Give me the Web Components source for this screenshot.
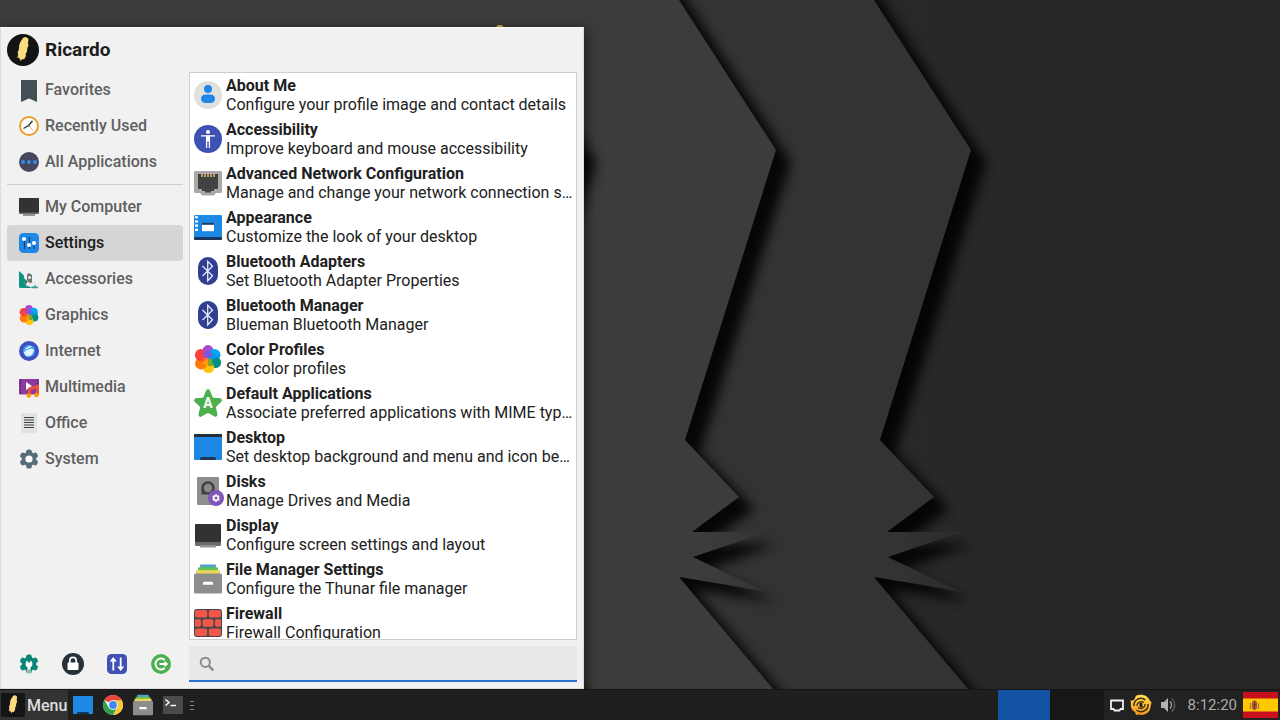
<!DOCTYPE html>
<html lang="en">
<head>
<meta charset="utf-8">
<title>Desktop</title>
<style>
html, body { height: 100%; margin: 0; }
body { font-family: Roboto, "Liberation Sans", sans-serif; font-size: 16px; line-height: 19px; background: #313231; overflow: hidden; }
</style>
</head>
<body>
<desk-top></desk-top>
<script>
const gear = (c, fill, hole, holeFill) => {
  let s = '';
  for (let i = 0; i < 6; i++) s += `<rect x="${c - c * .28}" y="${c * .04}" width="${c * .56}" height="${c}" rx="${c * .22}" transform="rotate(${i * 60} ${c} ${c})" fill="${fill}"/>`;
  return s + `<circle cx="${c}" cy="${c}" r="${c * .72}" fill="${fill}"/><circle cx="${c}" cy="${c}" r="${hole}" fill="${holeFill}"/>`;
};
const flower = `<circle cx="14" cy="5.5" r="5.4" fill="#a64bd0"/><circle cx="20.5" cy="10" r="6" fill="#06a4f5"/><circle cx="21.5" cy="17.5" r="5.6" fill="#008f86"/><circle cx="14.5" cy="22.5" r="5.6" fill="#ffc30b"/><circle cx="7" cy="18.5" r="5.9" fill="#ff7a08"/><circle cx="6.8" cy="10" r="5.9" fill="#f9403a"/><path d="M14 14V2.500A5.400 5.400 0 0 0 8.800 6.500L9 11Z" fill="#a64bd0"/><path d="M14 14L10 8.500 13.500 6 19 9Z" fill="#7a55dd"/><path d="M14 14L19 9 22 13.500 16 16Z" fill="#0b93dc"/><path d="M14 14L18 14 19 21 14 21Z" fill="#7fa62c"/><path d="M14 14L14 20 9 20 9 15Z" fill="#ff9a05"/><path d="M14 14L8 17 7 12Z" fill="#fb5a24"/>`;
const feather = `<path d="M15 5.500C16 3.500 18 2.800 19.200 3.200L21.300 4.800C21.800 6 21 7.500 21 9.500L21.600 11.500 20.300 14 20 17.500 18.600 20 19 22 17 25.500 15.300 25 13.800 26.800 12.600 24.500 10.600 23.200 11.200 20 10.600 18.500 12 15 12.200 11 13.400 8Z" fill="#fbdc80"/><path d="M11.500 22L10 24M14.500 25.500L13.500 27" stroke="#c99c3a" stroke-width=".8"/>`;
const bluetooth = `<rect x="4" width="20" height="28" rx="10" fill="#303f8f"/><path d="M8.500 9L18.500 18.700 13.700 23.800V4.300L18.500 9.300 8.500 19" fill="none" stroke="#e6eafb" stroke-width="1.300"/>`;
const monitor = `<rect x="1" y="3" width="26" height="22" rx="1.500" fill="#6b6b6b"/><rect x="1" y="3" width="26" height="18" rx="1.200" fill="#323232"/><rect x="6" y="24" width="16" height="2.500" fill="#949494"/>`;
const drawer = `<rect x="6" y="-.5" width="16" height="4" rx="1" fill="#4ba4c9"/><rect x="4" y="2.300" width="20" height="4" rx="1" fill="#69c04c"/><rect x="2" y="5.300" width="24" height="5" rx="1" fill="#ecd65c"/><rect y="8.500" width="28" height="20" rx="1.500" fill="#8d8d8d"/><rect x="9" y="16.800" width="10" height="3" rx=".5" fill="#fff"/>`;
const ICONS = {
  avatar: [32, `<circle cx="16" cy="16" r="16" fill="#141414"/>` + feather],
  whisker: [32, `<rect width="32" height="32" rx="1" fill="#151515"/>` + feather],
  bookmark: [20, `<path d="M2.500 0h15a.5.5 0 0 1 .5.5V22l-8-3.500L2 22V.5a.5.5 0 0 1 .5-.5Z" fill="#434f55"/>`],
  recent: [20, `<circle cx="10" cy="10" r="9" fill="#fdfdfd" stroke="#e99e2c" stroke-width="2"/><path d="M4.500 12.500L9.500 9.500 13.500 5" fill="none" stroke="#333" stroke-width="1.400"/><path d="M10 10l4 4.500" stroke="#e98b8b" stroke-width=".8"/><circle cx="10" cy="9.800" r="1.100" fill="#38a05a"/>`],
  apps: [20, `<circle cx="10" cy="10" r="10" fill="#46465f"/><g fill="#2f8fe8"><circle cx="4" cy="10" r="2"/><circle cx="10" cy="10" r="2"/><circle cx="16" cy="10" r="2"/></g>`],
  computer: [20, `<rect y="1" width="20" height="16" rx="1" fill="#6b6b6b"/><rect y="1" width="20" height="14.500" rx="1" fill="#323232"/><rect x="4" y="17" width="12" height="2" fill="#949494"/>`],
  display: [28, monitor],
  settings: [20, `<rect width="20" height="20" rx="4.500" fill="#1e88e5"/><path d="M5.500 7v9M10.500 4v8M15 12.500V16M10.500 13v3" stroke="#1c3c63" stroke-width="1.200"/><g fill="#fff"><circle cx="5" cy="6" r="2"/><circle cx="10" cy="12" r="2"/><circle cx="15" cy="10" r="2"/></g>`],
  accessories: [20, `<path d="M0 2l5 4.500V9l3 3-3 2 3 2.500L13 19H1.500A1.500 1.500 0 0 1 0 17.500Z" fill="#0b9480"/><path d="M8 5.500l2-1.500 3 2v7.500l-3 .5-2-3Z" fill="#6f7471"/><circle cx="10.500" cy="8.500" r="1.500" fill="#f1f1f1"/><path d="M8 12l-2 3" stroke="#4f5452" stroke-width="1.500"/><path d="M12 17.500h3l1.500-2 1 2.500 2-.8-1 2H13Z" fill="#3c9c8c"/><path d="M7 17l9-4" stroke="#dedede"/>`],
  flower: [28, flower],
  internet: [20, `<circle cx="10" cy="10" r="10" fill="#3e51c1"/><circle cx="10" cy="10" r="6" fill="#42a2f2"/><path d="M5 12c0-4 4-7.500 8-7l-2 2c2-.3 3 1 4 2l-1 3c-1 3-5 4-7 3Z" fill="#e2f2ff"/><path d="M4.500 11C8 6.500 12 8 15.500 6" stroke="#4a9be8" stroke-width="1.200" fill="none"/>`],
  multimedia: [20, `<rect y="2" width="20" height="15.500" rx=".8" fill="#8d3a9f"/><path d="M1.500 2.500v15M18.500 2.500v7" stroke="#4b1f63" stroke-width="1.200" stroke-dasharray="1.500 1.500"/><path d="M7 5l6 4-6 4Z" fill="#fff"/><path d="M10.500 18.500V12l8-2.500v8" fill="none" stroke="#ef5038" stroke-width="2.800"/><circle cx="9.800" cy="18.500" r="2.300" fill="#ff9800"/><circle cx="17.500" cy="18" r="2.300" fill="#ff9800"/>`],
  office: [20, `<rect x="2" width="16" height="20" rx="1" fill="#e2e2e2"/><path d="M5 4.500h10M5 7h10M5 9.500h10M5 12h10M5 14.500h10" stroke="#3f3f3f" stroke-width="1.100"/>`],
  system: [20, gear(10, '#546e7a', 3.6, '#fff')],
  aboutme: [28, `<circle cx="14" cy="14" r="14" fill="#e3e1df"/><circle cx="14" cy="8" r="4" fill="#1e88e5"/><rect x="7" y="13.500" width="14" height="8.500" rx="4.200" fill="#1e88e5"/>`],
  accessibility: [28, `<circle cx="14" cy="14" r="14" fill="#3f51b5"/><circle cx="14" cy="7" r="2" fill="#fff"/><path d="M7 10.800h14M12.600 11v12M15.400 11v12" fill="none" stroke="#fff" stroke-width="1.300"/><path d="M12 10.500h4v6h-4Z" fill="#fff"/>`],
  network: [28, `<path d="M1 2h26a1 1 0 0 1 1 1v20a1 1 0 0 1-1 1h-5l-2 2.500H8L6 24H1a1 1 0 0 1-1-1V3a1 1 0 0 1 1-1Z" fill="#a9a9a9"/><path d="M4 5h20v15h-4v2h-3v1.500h-6V22H8v-2H4Z" fill="#424242"/><path d="M8 5v3M11 5v3M14 5v3M17 5v3M20 5v3" stroke="#e6bd7e" stroke-width="1.500"/>`],
  appearance: [28, `<rect y="2" width="28" height="25" rx="1.200" fill="#1e88e5"/><path d="M0 24h28v2a1 1 0 0 1-1 1H1a1 1 0 0 1-1-1Z" fill="#17365a"/><path d="M1 3.200h3v2H1zM1 7.400h3v2.200H1zM1 11.600h3v2.200H1zM1 15.800h3V18H1z" fill="#fff"/><path d="M8 9.800h12v2.500H8z" fill="#173d69"/><path d="M8 11.800h12v6.400H8z" fill="#fff"/>`],
  bluetooth: [28, bluetooth],
  defaults: [28, `<path d="M14 2.200l3.500 8.300 8.500.8-6.400 6 1.900 8.500L14 21.500 6.500 25.800l1.900-8.500-6.400-6 8.500-.8Z" fill="#4caf50" stroke="#4caf50" stroke-width="4" stroke-linejoin="round"/><text x="14" y="19" text-anchor="middle" font-family="Roboto" font-weight="700" font-size="14" fill="#fff">A</text>`],
  desktop: [28, `<rect y="1" width="28" height="26" rx="1.200" fill="#1e88e5"/><path d="M1 1h26a1 1 0 0 1 1 1v2H0V2a1 1 0 0 1 1-1Z" fill="#2b3036"/><path d="M6 27v-1a2 2 0 0 1 2-2h12a2 2 0 0 1 2 2v1Z" fill="#1b3653"/>`],
  disks: [28, `<rect x="3" width="22" height="28" rx="1" fill="#8e8e8e"/><circle cx="14" cy="11" r="5.500" fill="#8a8a8a" stroke="#424242" stroke-width="2.600"/><path d="M7.500 11v6.500H12" fill="#424242"/><circle cx="22" cy="21" r="8" fill="#7e57b8"/><g transform="translate(18 17)">${gear(4, '#fff', 1.5, '#7e57b8')}</g>`],
  drawer: [28, drawer],
  firewall: [28, `<rect width="28" height="28" rx="3" fill="#474747"/><g fill="#f3574a"><rect x="1" y="1" width="12.300" height="7.600" rx="2"/><rect x="14.700" y="1" width="12.300" height="7.600" rx="2"/><path d="M1 10.200h4a2 2 0 0 1 2 2v3.600a2 2 0 0 1-2 2H1Z"/><rect x="8.500" y="10.200" width="11" height="7.600" rx="2"/><path d="M27 10.200h-4a2 2 0 0 0-2 2v3.600a2 2 0 0 0 2 2h4Z"/><rect x="1" y="19.400" width="12.300" height="7.600" rx="2"/><rect x="14.700" y="19.400" width="12.300" height="7.600" rx="2"/></g>`],
  prefs: [20, gear(10, '#0b8576', 3.4, '#fff') + `<path d="M8.700 10h2.600l.4 9.500H8.300Z" fill="#fff"/><path d="M8.800 4.500h2.400v4H8.800z" fill="#0b8576"/><path d="M8.900 15.500h2.200V19H8.900z" fill="#a9a5a2"/>`],
  lock: [22, `<circle cx="11" cy="11" r="11" fill="#263238"/><rect x="5.500" y="9.500" width="11" height="7.500" rx="1" fill="#fff"/><path d="M7.800 10V7.500a3.200 3.200 0 0 1 6.400 0V10" fill="none" stroke="#fff" stroke-width="1.700"/>`],
  switchuser: [20, `<rect width="20" height="20" rx="4.500" fill="#3f51b5"/><path d="M6.300 16.500V5M13.700 3.500V15" stroke="#fff" stroke-width="1.800"/><path d="M2.800 7.500L6.300 3l3.500 4.500ZM10.200 12.500l3.500 4.500 3.500-4.500Z" fill="#fff"/>`],
  logout: [20, `<circle cx="10" cy="10" r="10" fill="#4caf50"/><path d="M13.800 6A5.500 5.500 0 1 0 13.800 14" fill="none" stroke="#fff" stroke-width="2"/><path d="M8.500 10h6" stroke="#fff" stroke-width="2"/><path d="M13.500 6.800l3.800 3.200-3.800 3.200Z" fill="#fff"/>`],
  search: [16, `<circle cx="6.300" cy="7.300" r="4.600" fill="none" stroke="#8c8c8c" stroke-width="2"/><path d="M9.800 10.800l4.500 4.500" stroke="#8c8c8c" stroke-width="2.400"/>`],
  showdesk: [20, `<rect y="1" width="20" height="18" rx=".5" fill="#1e88e5"/><path d="M4 19v-.6A1.400 1.400 0 0 1 5.400 17h9.200a1.400 1.400 0 0 1 1.400 1.400v.6Z" fill="#17365a"/>`],
  chrome: [20, `<circle cx="10" cy="10" r="10" fill="#fff"/><path d="M10 10L1.340 5A10 10 0 0 1 18.660 5Z" fill="#e8453c"/><path d="M10 5.300h8.800A10 10 0 0 1 10 20L14.300 12.500Z" fill="#fcc934"/><path d="M1.340 5A10 10 0 0 0 10 20L14.100 12.400 10 14.700 5.900 12.400Z" fill="#2fa04f"/><circle cx="10" cy="10" r="4.800" fill="#fff"/><circle cx="10" cy="10" r="3.900" fill="#4285f4"/>`],
  terminal: [20, `<rect y="1" width="20" height="18" rx=".8" fill="#4b4b4b"/><path d="M2.500 4.500L6 7.500 2.500 10.500" fill="none" stroke="#fff" stroke-width="1.400"/><path d="M7.500 10.500h5.500" stroke="#fff" stroke-width="1.400"/>`],
  screen: [14, `<path d="M1 2.500h12v8.500H10.500L9.500 12.500h-5L3.500 11H1Z" fill="none" stroke="#f0f0f0" stroke-width="1.800"/>`],
  update: [22, `<defs><linearGradient id="u" x2="0" y2="1"><stop stop-color="#ffe14d"/><stop offset="1" stop-color="#f6921e"/></linearGradient></defs><path d="M6 1.800C11-.5 18 1 20 7l1.500 1-1 5C20 19 14 22 9 20.500L6 21 5 18C.5 16 .5 11 1 8.500L0 7l4-1Z" fill="url(#u)"/><path d="M4 12a7 7 0 0 1 11.500-6M18 10a7 7 0 0 1-11.500 6" fill="none" stroke="#3a2c12" stroke-width="1.500"/><path d="M7 12a4.300 4.300 0 0 1 7-3.500M15 10a4.300 4.300 0 0 1-7 3.500" fill="none" stroke="#3a2c12" stroke-width="1.200"/><rect x="9.500" y="8.500" width="3" height="5" fill="#33240e"/>`],
  volume: [20, `<path d="M3 7h3l4-4v14L6 13H3Z" fill="#b4b4b4"/><path d="M12 6.500a5 5 0 0 1 0 7" fill="none" stroke="#a5a5a5" stroke-width="1.400"/><path d="M13.500 3.500a8.200 8.200 0 0 1 0 13" fill="none" stroke="#565656" stroke-width="1.500"/>`]
};

function define(name, html, setup) {
  const template = document.createElement('template');
  template.innerHTML = html;
  customElements.define(name, class extends HTMLElement {
    connectedCallback() {
      if (this.shadowRoot) return;
      const content = template.content.cloneNode(true);
      if (setup) setup(this, content);
      this.attachShadow({ mode: 'open' }).append(content);
    }
  });
}

define('app-icon', `<style>:host{display:block;flex:none;width:var(--size,20px);height:var(--size,20px)}div,svg{display:block;width:100%;height:100%}svg{overflow:visible}</style><div></div>`, (host, root) => {
  const [box, art] = ICONS[host.getAttribute('name')];
  root.querySelector('div').innerHTML = `<svg viewBox="0 0 ${box} ${box}" aria-hidden="true">${art}</svg>`;
});

define('wall-paper', `<style>
:host{display:block;position:absolute;inset:0;z-index:0}
svg{display:block;width:100%;height:100%}
</style>
<svg viewBox="0 0 1280 720" preserveAspectRatio="xMidYMid slice" aria-hidden="true">
<defs>
<filter id="soft" x="-20%" y="-20%" width="140%" height="140%"><feGaussianBlur stdDeviation="6"/></filter>
<linearGradient id="edge" x1="0" x2="1"><stop offset="0" stop-color="#292a29"/><stop offset="1" stop-color="#262726"/></linearGradient>
<linearGradient id="f1" gradientUnits="userSpaceOnUse" x1="705" x2="772" y1="0" y2="0"><stop stop-color="#323332" stop-opacity="0"/><stop offset="1" stop-color="#323332"/></linearGradient>
<linearGradient id="f2" gradientUnits="userSpaceOnUse" x1="705" x2="772" y1="0" y2="0"><stop stop-color="#292a29" stop-opacity="0"/><stop offset="1" stop-color="#292a29"/></linearGradient>
<path id="s" d="M-20-40H653L679 0 776 150 685 440 739 497 692 532H766L693 557 764 591 679 577 774 690 800 721V760H-20Z"/>
<path id="shade" d="M-20-40H653L679 0 776 150 685 440 739 497 692 532H762L693 557 760 590 679 577 774 690 800 721V760H-20Z"/>
<path id="tips" d="M705 531.500H768L705 553ZM705 562L766 592 705 581Z"/>
</defs>
<rect width="1280" height="720" fill="url(#edge)"/>
<g transform="translate(195)"><use href="#shade" transform="translate(15 12)" filter="url(#soft)" fill="#000" opacity=".88"/><use href="#s" fill="#323332"/><use href="#tips" fill="url(#f2)"/></g>
<use href="#shade" transform="translate(15 12)" filter="url(#soft)" fill="#000" opacity=".88"/><use href="#s" fill="#3b3c3b"/><use href="#tips" fill="url(#f1)"/>
<g transform="translate(-195)"><use href="#shade" transform="translate(15 12)" filter="url(#soft)" fill="#000" opacity=".88"/><use href="#s" fill="#3e3f3e"/></g>
<rect width="572" height="27" fill="#3b3c3b"/>
<path d="M495 28l3-3h4l2 3Z" fill="#c9b344"/>
</svg>`);

define('menu-category', `<style>
:host{display:block}
button{display:flex;align-items:center;gap:6px;width:100%;height:36px;padding:0 12px;border:0;border-radius:4px;background:none;color:#5f5f5f;font:500 16px/19px Roboto,"Liberation Sans",sans-serif;text-align:left;white-space:nowrap}
span{padding-bottom:2px}
:host([selected]) button{background:#d5d5d5;color:#1c1c1c}
</style><button type="button"><app-icon></app-icon><span><slot></slot></span></button>`, (host, root) => {
  root.querySelector('app-icon').setAttribute('name', host.getAttribute('icon'));
});

define('menu-launcher', `<style>
:host{display:block}
button{display:grid;grid-template-columns:28px minmax(0,1fr);column-gap:4px;align-items:center;width:100%;height:44px;padding:0 0 0 4px;border:0;background:none;color:#212121;font:400 16px/19px Roboto,"Liberation Sans",sans-serif;text-align:left;white-space:nowrap}
app-icon{--size:28px}
strong,span{display:block;overflow:hidden;text-overflow:ellipsis}
strong{font-weight:700}
</style><button type="button"><app-icon></app-icon><div><strong><slot></slot></strong><span></span></div></button>`, (host, root) => {
  root.querySelector('app-icon').setAttribute('name', host.getAttribute('icon'));
  root.querySelector('span').textContent = host.getAttribute('description');
});

define('icon-button', `<style>
:host{display:block}
button{display:grid;place-items:center;width:100%;height:100%;padding:0;border:0;background:none}
</style><button type="button"><app-icon></app-icon></button>`, (host, root) => {
  root.querySelector('app-icon').setAttribute('name', host.getAttribute('icon'));
  root.querySelector('button').setAttribute('aria-label', host.getAttribute('label'));
});

define('app-menu', `<style>
:host{display:grid;grid-template:32px minmax(0,1fr) 36px / 176px minmax(0,1fr);gap:6px;box-sizing:border-box;width:584px;max-width:100%;padding:6px;border:1px solid #dcdcdc;border-top-color:#fafafa;background:#f1f1f1;box-shadow:2px 2px 12px rgba(0,0,0,.5)}
header{grid-column:1/-1;display:flex;align-items:center;gap:6px;font-size:19px;line-height:24px;font-weight:700;color:#1c1c1c}
header app-icon{--size:32px}
hr{height:1px;margin:4px 0;border:0;background:#d0d0d0}
.list{overflow:hidden auto;scrollbar-width:none;border:1px solid #cfcfcf;background:#fff}
.session{display:grid;grid-template-columns:repeat(4,1fr)}
label{display:flex;align-items:center;gap:8px;padding:0 10px;border-bottom:2px solid #2a70d0;background:#e8e8e8}
label app-icon{--size:16px}
input{flex:1;min-width:0;height:24px;padding:0;border:0;outline:0;background:none;font:400 16px/19px Roboto,sans-serif;color:#212121}
.lock{--size:22px}
</style>
<header><app-icon name="avatar"></app-icon>Ricardo</header>
<nav aria-label="Categories">
<menu-category icon="bookmark">Favorites</menu-category>
<menu-category icon="recent">Recently Used</menu-category>
<menu-category icon="apps">All Applications</menu-category>
<hr>
<menu-category icon="computer">My Computer</menu-category>
<menu-category icon="settings" selected>Settings</menu-category>
<menu-category icon="accessories">Accessories</menu-category>
<menu-category icon="flower">Graphics</menu-category>
<menu-category icon="internet">Internet</menu-category>
<menu-category icon="multimedia">Multimedia</menu-category>
<menu-category icon="office">Office</menu-category>
<menu-category icon="system">System</menu-category>
</nav>
<div class="list">
<menu-launcher icon="aboutme" description="Configure your profile image and contact details">About Me</menu-launcher>
<menu-launcher icon="accessibility" description="Improve keyboard and mouse accessibility">Accessibility</menu-launcher>
<menu-launcher icon="network" description="Manage and change your network connection s…">Advanced Network Configuration</menu-launcher>
<menu-launcher icon="appearance" description="Customize the look of your desktop">Appearance</menu-launcher>
<menu-launcher icon="bluetooth" description="Set Bluetooth Adapter Properties">Bluetooth Adapters</menu-launcher>
<menu-launcher icon="bluetooth" description="Blueman Bluetooth Manager">Bluetooth Manager</menu-launcher>
<menu-launcher icon="flower" description="Set color profiles">Color Profiles</menu-launcher>
<menu-launcher icon="defaults" description="Associate preferred applications with MIME typ…">Default Applications</menu-launcher>
<menu-launcher icon="desktop" description="Set desktop background and menu and icon be…">Desktop</menu-launcher>
<menu-launcher icon="disks" description="Manage Drives and Media">Disks</menu-launcher>
<menu-launcher icon="display" description="Configure screen settings and layout">Display</menu-launcher>
<menu-launcher icon="drawer" description="Configure the Thunar file manager">File Manager Settings</menu-launcher>
<menu-launcher icon="firewall" description="Firewall Configuration">Firewall</menu-launcher>
</div>
<div class="session">
<icon-button icon="prefs" label="All settings"></icon-button>
<icon-button class="lock" icon="lock" label="Lock screen"></icon-button>
<icon-button icon="switchuser" label="Switch user"></icon-button>
<icon-button icon="logout" label="Log out"></icon-button>
</div>
<label><app-icon name="search"></app-icon><input type="text" aria-label="Search applications"></label>`);

define('country-flag', `<style>:host{display:block;width:35px;height:26px}svg{display:block;width:100%;height:100%}</style>
<svg viewBox="0 0 35 26" role="img" aria-label="Spanish keyboard layout"><path fill="#c8101e" d="M0 0h35v26H0z"/><path fill="#ffc800" d="M0 6.500h35v13H0z"/><path d="M9 10l2.500-2 2.500 2v6.500l-2.500 2-2.500-2Z" fill="#b0583a"/><path d="M7.500 11v6M15.500 11v6" stroke="#a8754a" stroke-width="1.300"/><path d="M9.500 13h4M11.500 9v8" stroke="#6f3a35"/></svg>`);

define('task-bar', `<style>
:host{display:flex;align-items:stretch;box-sizing:border-box;height:31px;border-top:1px solid #151515;background:#1f1f1f;color:#d6d6d6}
.start{display:flex;align-items:center;gap:2px;padding:0 1px;border:0;background:#333;color:#dedede;font:500 16px/19px Roboto,sans-serif}
.start app-icon{--size:24px}
nav{display:flex}
nav icon-button{width:30px}
.handle{align-self:center;width:4px;height:9px;margin-left:2px;background:repeating-linear-gradient(#8a8a8a 0 1px,transparent 1px 4px)}
.pager{display:flex;gap:2px;margin-left:auto;background:#171717}
.pager button{width:52px;padding:0;border:0;background:#171717}
.pager button.on{background:#1351a5}
.tray{display:flex;align-items:center;gap:6px;padding:0 2px 0 6px;background:#222}
.small{--size:14px}.big{--size:22px}
time{min-width:48px;margin-left:4px;font-size:15px;line-height:19px;color:#a9a9a9;white-space:nowrap}
</style>
<button class="start" type="button"><app-icon name="whisker"></app-icon>Menu</button>
<nav aria-label="Launchers">
<icon-button icon="showdesk" label="Show desktop"></icon-button>
<icon-button icon="chrome" label="Web browser"></icon-button>
<icon-button icon="drawer" label="File manager"></icon-button>
<icon-button icon="terminal" label="Terminal"></icon-button>
</nav>
<div class="handle"></div>
<div class="pager"><button class="on" type="button" aria-label="Workspace 1"></button><button type="button" aria-label="Workspace 2"></button></div>
<div class="tray"><icon-button class="small" icon="screen" label="Displays"></icon-button><icon-button class="big" icon="update" label="Updates"></icon-button><icon-button icon="volume" label="Volume"></icon-button><time datetime="08:12:20">8:12:20</time><country-flag></country-flag></div>`);

define('desk-top', `<style>
:host{display:flex;flex-direction:column;position:relative;height:100vh;overflow:hidden}
main{position:relative;flex:1;min-height:0;display:flex;align-items:stretch;padding-top:27px;overflow:hidden}
app-menu{position:relative}
task-bar{position:relative}
</style>
<wall-paper></wall-paper>
<main><app-menu></app-menu></main>
<task-bar></task-bar>`);
</script>
</body>
</html>
